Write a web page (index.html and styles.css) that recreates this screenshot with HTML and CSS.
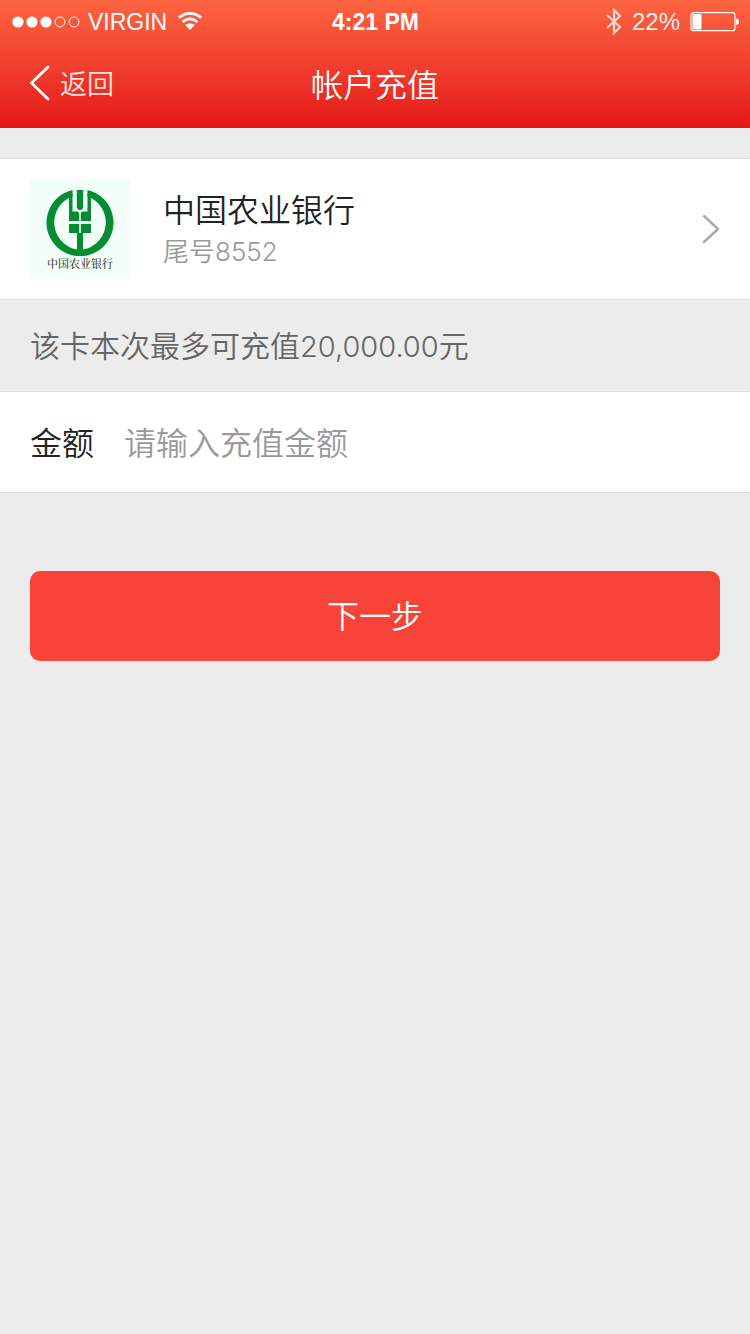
FILE: index.html
```html
<!doctype html>
<html lang="zh-CN">
<head>
<meta charset="utf-8">
<meta name="viewport" content="width=device-width">
<title>帐户充值</title>
<link rel="stylesheet" href="styles.css">
</head>
<body>
<header class="header">
	<div class="status">
		<div class="status-left">
			<svg class="signal" width="68" height="12" viewBox="0 0 68 12">
				<g fill="#fff"><circle cx="6" cy="6" r="5.6"/><circle cx="20" cy="6" r="5.6"/><circle cx="34" cy="6" r="5.6"/></g>
				<g fill="none" stroke="#fff"><circle cx="48" cy="6" r="5"/><circle cx="62" cy="6" r="5"/></g>
			</svg>
			<span class="carrier">VIRGIN</span>
			<svg width="24" height="20" viewBox="0 0 24 20">
				<g fill="none" stroke="#fff" stroke-width="2.6">
					<path d="M.9 5.6Q12-3 23.1 5.6"/>
					<path d="M4.6 9.900Q12 3.700 19.400 9.900"/>
				</g>
				<path fill="#fff" d="M7.200 12.900Q12 9.400 16.800 12.900L12 18z"/>
			</svg>
		</div>
		<span class="clock">4:21 PM</span>
		<div class="status-right">
			<svg width="16" height="28" viewBox="0 0 16 28" fill="none" stroke="#ffd9d0" stroke-width="2.2">
				<path d="M1 7L14 19L8 25V2L14 8L1 20"/>
			</svg>
			<span class="percent">22%</span>
			<svg width="49" height="20" viewBox="0 0 49 20">
				<rect x="1" y=".7" width="44" height="18" rx="2.5" fill="none" stroke="#fff" stroke-width="1.2"/>
				<rect x="2.5" y="2" width="9" height="15.4" rx="1" fill="#fff"/>
				<path fill="#fff" d="M46 6.5Q49 7 49 9.700T46 13z"/>
			</svg>
		</div>
	</div>
	<nav class="nav">
		<a class="back" href="#">
			<svg width="20" height="36" viewBox="0 0 20 36" fill="none" stroke="#fff" stroke-width="2.8" stroke-linecap="round" stroke-linejoin="round">
				<path d="M18 2L1.500 18L18 34"/>
			</svg>
			<span>返回</span>
		</a>
		<h1 class="title">帐户充值</h1>
	</nav>
</header>
<main>
	<a class="bank" href="#">
		<span class="logo">
			<svg width="68" height="67" viewBox="0 0 68 67" fill="#078c35">
				<path d="M26.500 1A33.500 33.500 0 1 0 41.500 1V7.500A27.500 27.500 0 0 1 37 60.500V44H31V60.500A27.500 27.500 0 0 1 26.500 7.500z"/>
				<path d="M23 4H26.500V22.500H31.500L33.200 24V32H23z"/>
				<path d="M45 4H41.500V22.500H36.500L34.800 24V32H45z"/>
				<path d="M30.800 1H37.200V18.500L35.500 21H32.500L30.800 18.500z"/>
				<path d="M23 35H33.200V44H23zM34.800 35H45V44H34.800z"/>
			</svg>
			<span class="logo-name">中国农业银行</span>
		</span>
		<span class="bank-info">
			<span class="bank-name">中国农业银行</span>
			<span class="bank-card">尾号<span class="card-num">8552</span></span>
		</span>
		<svg width="18" height="30" viewBox="0 0 18 30" fill="none" stroke="#aaa" stroke-width="2.4" stroke-linecap="round" stroke-linejoin="round">
			<path d="M2 2L16 15L2 28"/>
		</svg>
	</a>
	<p class="limit">该卡本次最多可充值<span class="limit-num">20,000.00</span>元</p>
	<form class="form">
		<div class="field">
			<label for="amount">金额</label>
			<input type="text" id="amount" name="amount" placeholder="请输入充值金额">
		</div>
		<button class="next" type="button">下一步</button>
	</form>
</main>
</body>
</html>
```

FILE: styles.css
```css
* {
	box-sizing: border-box;
}
body {
	margin: 0;
	background: #ececec;
	color: #222;
	font-family: "Noto Sans CJK SC", sans-serif;
	font-weight: 350;
}
a {
	color: inherit;
	text-decoration: none;
}
svg {
	display: block;
	flex: none;
}

/* header */
.header {
	background: linear-gradient(#fd6541, #f0402f 50%, #e61717);
	color: #fff;
}
.status {
	display: grid;
	grid-template-columns: 1fr auto 1fr;
	align-items: center;
	height: 44px;
	padding: 0 11px 0 12px;
	font: 23px "Liberation Sans", Arial, sans-serif;
}
.status-left,
.status-right {
	display: flex;
	align-items: center;
}
.status-left {
	gap: 8px;
}
.carrier {
	margin-right: 3px;
}
.status-right {
	justify-content: flex-end;
	gap: 10px;
}
.percent {
	color: #ffece8;
	font-size: 24px;
}
.clock {
	font-weight: bold;
}
.nav {
	display: grid;
	grid-template-columns: 1fr auto 1fr;
	align-items: center;
	height: 84px;
	padding: 0 30px 6px;
}
.back {
	display: flex;
	align-items: center;
	gap: 10px;
	color: #ffe4e0;
	font-size: 27px;
	line-height: 36px;
}
.title {
	margin: 0;
	font-size: 32px;
	font-weight: 350;
	line-height: 48px;
}

/* bank card */
.bank {
	display: flex;
	align-items: center;
	margin-top: 30px;
	padding: 20px 30px;
	background: #fff;
	border: solid #dedede;
	border-width: 1px 0;
}
.logo {
	display: flex;
	flex-direction: column;
	align-items: center;
	width: 100px;
	height: 100px;
	padding-top: 10px;
	background: #f2fff8;
}
.logo-name {
	color: #111;
	font-family: "Noto Serif CJK SC", "Noto Sans CJK SC", serif;
	font-size: 11px;
	font-weight: 400;
	line-height: 14px;
}
.bank-info {
	flex: 1;
	margin-left: 33px;
}
.bank-name,
.bank-card {
	display: block;
}
.bank-name {
	font-size: 32px;
	line-height: 44px;
}
.bank-card {
	color: #999;
	font-size: 26px;
	line-height: 40px;
}
.card-num,
.limit-num {
	font-family: Inter, "Liberation Sans", sans-serif;
	font-weight: 300;
}
.limit {
	margin: 0;
	padding: 23px 30px 25px;
	color: #666;
	font-size: 30px;
	line-height: 43px;
}
.limit-num {
	font-size: 29px;
}

/* amount */
.form {
	display: flex;
	flex-direction: column;
	margin-top: -2px;
}
.field {
	display: flex;
	align-items: center;
	gap: 30px;
	height: 102px;
	padding: 0 30px 3px;
	background: #fff;
	border: solid #dedede;
	border-width: 1px 0;
	font-size: 32px;
}
.field input {
	flex: 1;
	min-width: 0;
	padding: 0;
	border: 0;
	outline: 0;
	background: none;
	color: #222;
	font: inherit;
}
.field input::placeholder {
	color: #999;
}
.next {
	height: 90px;
	margin: 78px 30px;
	padding: 0 0 4px;
	border: 0;
	border-radius: 10px;
	background: #f84438;
	color: #fff;
	font: inherit;
	font-size: 32px;
}
```
